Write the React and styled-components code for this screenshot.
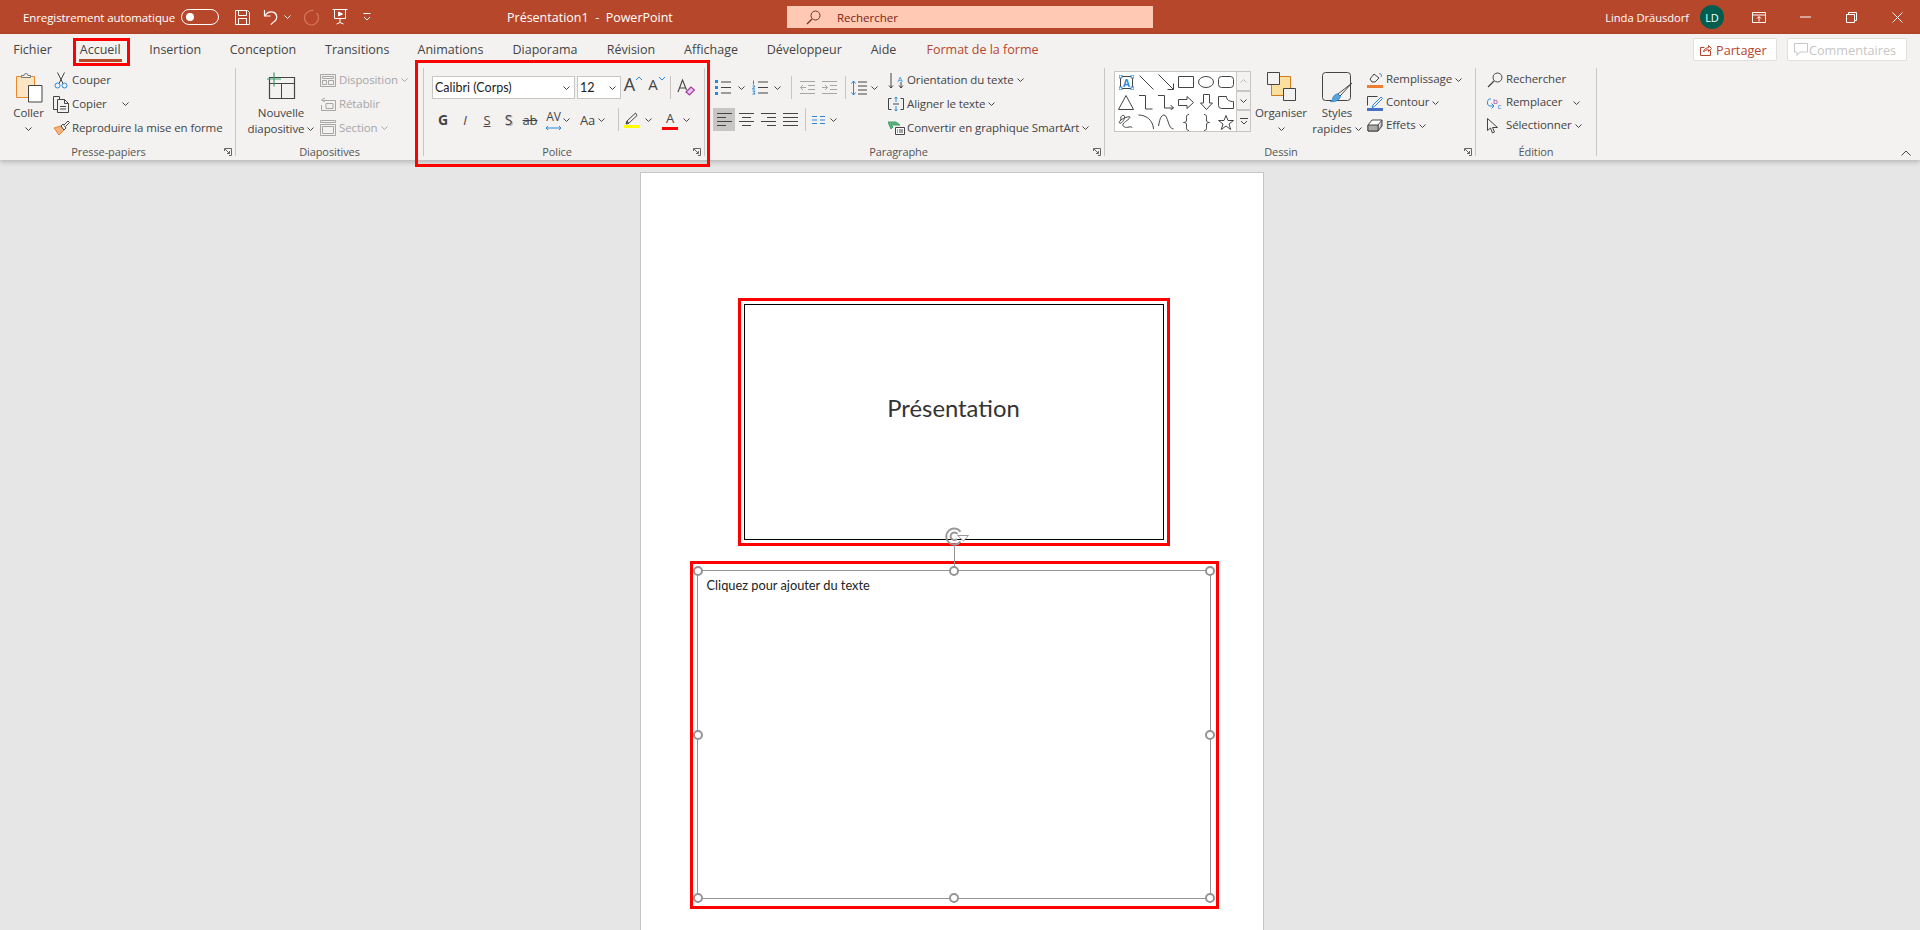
import React from 'react';
import styled, { createGlobalStyle } from 'styled-components';

const GlobalStyle = createGlobalStyle`
  html, body, #root { margin: 0; height: 100%; }
  body {
    overflow: hidden;
    background: #e6e6e6;
    font-family: "Open Sans", "Noto Sans", sans-serif;
    color: #444;
  }
  * { box-sizing: border-box; }
`;

const BRAND = '#b7472a';

const Svg = ({ w, h = w, stroke = '#444', children }) => (
  <svg width={w} height={h} viewBox={`0 0 ${w} ${h}`} fill="none" stroke={stroke} strokeWidth="1" style={{ display: 'block', flex: 'none' }}>
    {children}
  </svg>
);

const Chevron = ({ color = '#444' }) => (
  <Svg w={7} h={4} stroke={color}><path d="M.5.5l3 3 3-3" /></Svg>
);

/* title bar icons */
const SaveIcon = () => (
  <Svg w={17} stroke="#fff"><path d="M1.5 1.5h12l2 2v12h-14zM4.5 1.5v5h8v-5M4.5 15.5v-6h8v6" /></Svg>
);
const UndoIcon = () => (
  <Svg w={16} stroke="#fff" ><path d="M1.5 1v6h6" strokeWidth="1.2" /><path d="M2 7C4 3.5 7 2.5 10 3.2c4.2 1 5 6.5 1.5 9.2-1 .8-2.5 2-3.7 3.2" strokeWidth="1.2" /></Svg>
);
const RedoIcon = () => (
  <Svg w={17} stroke="#d9775c"><path d="M10.5 1.5C6 .8 1.5 4 1.5 9a7 7 0 1 0 14 0c0-2-.8-3.800-2-5" strokeWidth="1.2" /></Svg>
);
const PresentIcon = () => (
  <Svg w={16} stroke="#fff"><path d="M.5.500h15M2.500.5v9h11v-9M8 9.500v4M4.500 15l3.500-1.500 3.500 1.500" /><path d="M6.500 3l4 2-4 2z" fill="#fff" /></Svg>
);
const CustomizeIcon = () => (
  <Svg w={8} h={8} stroke="#fff"><path d="M.5.500h7M1 4l3 3 3-3" /></Svg>
);
const SearchGlass = ({ c = '#7a2f1c', w = 15 }) => (
  <Svg w={w} stroke={c}><circle cx={w - 5.5} cy="5.500" r="4.500" /><path d={`M${w - 9} 9L1 ${w - 1}`} strokeWidth="1.300" /></Svg>
);
const RibbonModeIcon = () => (
  <Svg w={14} h={11} stroke="#fff"><path d="M.5 3h13M.5.500h13v10H.5z" /><path d="M7 9.500v-5M5 6.500l2-2 2 2" /></Svg>
);
const MinIcon = () => <Svg w={11} h={2} stroke="#fff"><path d="M0 1h11" /></Svg>;
const RestoreIcon = () => (
  <Svg w={11} stroke="#fff"><path d="M.5 2.500h8v8h-8zM2.500 2.500v-2h8v8h-2" /></Svg>
);
const CloseIcon = () => (
  <Svg w={11} stroke="#fff"><path d="M.5.500l10 10M10.500.500l-10 10" /></Svg>
);
const ShareIcon = () => (
  <Svg w={12} stroke={BRAND}><path d="M10.500 6.500v5h-10v-8h4M3.500 8c.4-2.800 2.500-4.200 5-4.200V1.500l3 3-3 3V5.800C6.500 5.800 4.700 6.300 3.500 8z" /></Svg>
);
const CommentIcon = () => (
  <Svg w={14} h={14} stroke="#c8c6c4"><path d="M.5.500h13v8.500H6l-3 3.500V9H.5z" /></Svg>
);

/* clipboard */
const PasteIcon = () => (
  <Svg w={28} h={31}>
    <path d="M1.500 4.500h18v21h-18z" fill="#fbe5c5" stroke="#e8892c" />
    <path d="M4 7h13v16H4z" fill="#fbe5c5" stroke="none" />
    <path d="M6.500 5.500V3.500h2.500a2 2 0 0 1 4 0h2.500v2z" fill="#f3f2f1" stroke="#777" />
    <path d="M13.500 13.500h13.500v16.500H13.500z" fill="#fff" stroke="#444" />
  </Svg>
);
const CutIcon = () => (
  <Svg w={16} h={17}>
    <path d="M4.500 .5l5.500 11M11.500 .5L6 11.500" />
    <circle cx="4.500" cy="13.500" r="2.500" stroke="#2b88d8" />
    <circle cx="11.500" cy="13.500" r="2.500" stroke="#2b88d8" />
  </Svg>
);
const CopyIcon = () => (
  <Svg w={16} h={17}>
    <path d="M4.500 13.500H.5V.5h6v3" />
    <path d="M4.500 3.500h7l4 4v9h-11zM11.500 3.500v4h4M7 10.500h6M7 13h6" />
  </Svg>
);
const PainterIcon = () => (
  <Svg w={17} h={16}>
    <path d="M1 8l5 7 5-5-3-4z" fill="#f4b183" stroke="#e8892c" />
    <path d="M8 6l3 4 2-2-3-4z" fill="#fff" />
    <path d="M11 5l4-4 1.500 1.500-4 4" fill="#fff" />
  </Svg>
);

/* slides */
const NewSlideIcon = () => (
  <Svg w={31} h={27}>
    <path d="M3.500 5.500h25v21h-25z" strokeWidth="1.200" fill="#f3f2f1" />
    <path d="M3.500 11.500h25M15.500 11.500v15" />
    <path d="M8 .5v14M1 7h14" stroke="#3ca06a" strokeWidth="1.200" />
  </Svg>
);
const LayoutIcon = () => (
  <Svg w={16} h={15} stroke="#a6a6a6"><path d="M.5 1.500h15v12H.5zM2.500 3.500h11v2h-11zM2.500 7.500h4v4h-4zM8.500 7.500h5v4h-5z" /></Svg>
);
const ResetIcon = () => (
  <Svg w={16} h={15} stroke="#a6a6a6"><path d="M3.500 3.500h12v10H1.500V8M6 6.500h7v5H6zM5 1L1.500 3 5 5" /></Svg>
);
const SectionIcon = () => (
  <Svg w={16} h={16} stroke="#a6a6a6"><path d="M.5.500h15v2H.5zM.5 4.500h15v11H.5zM2.500 6.500h11v7h-11z" /></Svg>
);

/* font */
const Letter = styled.span`
  font-size: ${p => p.$s || 13}px;
  font-weight: ${p => (p.$bold ? 700 : 400)};
  font-style: ${p => (p.$italic ? 'italic' : 'normal')};
  text-decoration: ${p => p.$deco || 'none'};
  text-shadow: ${p => (p.$shadow ? '1px 1px 1px #aaa' : 'none')};
  line-height: 16px;
  color: #444;
`;
const CaseUp = () => (
  <Svg w={8} h={5} stroke="#2b88d8"><path d="M1 4l3-3 3 3" /></Svg>
);
const CaseDown = () => (
  <Svg w={8} h={5} stroke="#2b88d8"><path d="M1 1l3 3 3-3" /></Svg>
);
const ClearIcon = () => (
  <Svg w={18} h={17}>
    <path d="M1 13L5.500 1 9.500 11M2.500 9h6" strokeWidth="1.100" />
    <path d="M9 13l5-5 3.500 3-5 5z" fill="#e8c6ef" stroke="#a4379c" strokeWidth="1.200" />
  </Svg>
);
const SpacingIcon = () => (
  <Svg w={17} h={6} stroke="#2b88d8"><path d="M1 3h15M3 1L1 3l2 2M14 1l2 2-2 2" /></Svg>
);
const HighlightIcon = () => (
  <Svg w={16} h={16}>
    <path d="M3 9l1.500 2.500L13 3.500 11.500 1z" />
    <path d="M2 12l1-3 1.500 2.500z" fill="#777" />
    <path d="M0 13h16v3H0z" fill="#ffff00" stroke="none" />
  </Svg>
);

/* paragraph */
const ListLines = ({ kind }) => (
  <Svg w={kind === 'num' ? 17 : 16} h={15}>
    <path d={kind === 'num' ? 'M7 2h10M7 7.500h10M7 13h10' : 'M6 2h10M6 7.500h10M6 13h10'} />
    {kind === 'num' ? (
      <path d="M2.500 .5v4M1.500 6h2.500l-2.500 3h2.500M1.500 11h2.500l-1 1.500 1 1.500h-2.500" stroke="#2b88d8" />
    ) : (
      <path d="M0 0h3v3H0zM0 6h3v3H0zM0 12h3v3H0z" fill="#2b88d8" stroke="none" />
    )}
  </Svg>
);
const IndentIcon = ({ dir }) => (
  <Svg w={15} h={13} stroke="#a6a6a6">
    <path d="M0 .5h15M8 4.500h7M8 8.500h7M0 12.500h15" />
    <path d={dir === 'out' ? 'M6 6.500H.5M3 4L.5 6.500 3 9' : 'M0 6.500h5.500M3 4l2.500 2.500L3 9'} />
  </Svg>
);
const LineSpacing = () => (
  <Svg w={16} h={16}>
    <path d="M2.500 1v14" stroke="#2b88d8" />
    <path d="M.5 3.500l2-2.500 2 2.500M.5 12.500l2 2.500 2-2.500" stroke="#2b88d8" />
    <path d="M7 2h9M7 6h9M7 10h9M7 14h9" />
  </Svg>
);
const alignPaths = {
  left: 'M0 .5h15M0 4.500h9M0 8.500h15M0 12.500h9',
  center: 'M0 .5h15M3 4.500h9M0 8.500h15M3 12.500h9',
  right: 'M0 .5h15M6 4.500h9M0 8.500h15M6 12.500h9',
  justify: 'M0 .5h15M0 4.500h15M0 8.500h15M0 12.500h15',
};
const AlignIcon = ({ kind }) => <Svg w={15} h={13}><path d={alignPaths[kind]} /></Svg>;
const ColumnsIcon = () => (
  <Svg w={13} h={8} stroke="#2b88d8"><path d="M0 .5h5M8 .5h5M0 4h5M8 4h5M0 7.500h5M8 7.500h5" /></Svg>
);
const OrientIcon = () => (
  <Svg w={17} h={17}>
    <path d="M3 1v15M1 13.500L3 16l2-2.500M13 10v6M11 13.500l2 2.500 2-2.500" />
    <text x="9.500" y="9.500" fontFamily="Open Sans" fontSize="8" stroke="none" fill="#2b88d8">A</text>
  </Svg>
);
const AlignTextIcon = () => (
  <Svg w={16} h={16}>
    <path d="M3.500 2.500h-3v11h3M12.500 2.500h3v11h-3" />
    <path d="M5 8h6" />
    <path d="M8 1v5M6.500 2.500L8 1l1.500 1.500M8 10v5M6.500 13.500L8 15l1.500-1.500" stroke="#2b88d8" />
  </Svg>
);
const SmartArtIcon = () => (
  <Svg w={17} h={14}>
    <path d="M0 1h8l4 3H3l2 2-2 2z" fill="#5fb37d" stroke="#3ca06a" />
    <path d="M7.500 6.500h9v7h-9z" fill="#fff" />
    <path d="M9 9h1M11 9h4M9 11h1M11 11h4" />
  </Svg>
);

/* drawing gallery */
const Shapes = [
  <Svg w={15} key="box"><path d="M1.500 1.500h12v12h-12z" /><path d="M0 0h3v3H0zM12 0h3v3h-3zM0 12h3v3H0zM12 12h3v3h-3z" fill="#fff" stroke="#2b88d8" /><text x="4" y="12" fontFamily="Open Sans" fontWeight="700" fontSize="10" stroke="none" fill="#2b88d8">A</text></Svg>,
  <Svg w={15} key="line"><path d="M.5.500l14 14" /></Svg>,
  <Svg w={16} key="arrow"><path d="M.5.500l15 15M15.500 9.500v6h-6" /></Svg>,
  <Svg w={16} h={12} key="rect"><path d="M.5.500h15v11H.5z" /></Svg>,
  <Svg w={16} h={12} key="ell"><ellipse cx="8" cy="6" rx="7.500" ry="5.500" /></Svg>,
  <Svg w={16} h={12} key="rr"><rect x=".5" y=".5" width="15" height="11" rx="3" /></Svg>,
  <Svg w={16} h={15} key="tri"><path d="M8 .5l7.500 14H.5z" /></Svg>,
  <Svg w={14} h={15} key="elb"><path d="M0 .5h6.500v13.500h7" /></Svg>,
  <Svg w={16} h={15} key="elba"><path d="M0 .5h6.500v12.500h9M12.500 10l3 3-3 2" /></Svg>,
  <Svg w={16} h={13} key="ra"><path d="M.5 3.500h8.500v-3l6.500 6-6.500 6v-3H.5z" /></Svg>,
  <Svg w={13} h={16} key="da"><path d="M3.500.5h6v8.500h3l-6 6.500-6-6.500h3z" /></Svg>,
  <Svg w={16} h={13} key="fc"><path d="M.5.500h8c0 4 3.500 5 7 5v7h-12a3 3 0 0 1-3-3z" /></Svg>,
  <Svg w={16} key="scr"><path d="M3 6C2 3 4 .5 6 1.500 8 3 5 8 3 9c-2 1-2.500-1 0-3 3-2.500 9-4 9-3 0 2-6 5-7 7-1 3 3 4 6 3 2-.5 3 0 3 1" /></Svg>,
  <Svg w={16} key="arc"><path d="M.5 1C8 1 15 6 15.500 15" /></Svg>,
  <Svg w={16} key="sc"><path d="M.5 12C2 3 4 1 6 1c4 0 4 14 9.500 14" /></Svg>,
  <Svg w={7} h={17} key="lb"><path d="M6 .5C3 .5 3.500 3 3.500 6c0 2-1 2.500-3 2.500 2 0 3 .5 3 2.500 0 3-.5 5.500 2.500 5.500" /></Svg>,
  <Svg w={7} h={17} key="rb"><path d="M1 .5C4 .5 3.500 3 3.500 6c0 2 1 2.500 3 2.500-2 0-3 .5-3 2.500 0 3 .5 5.500-2.500 5.500" /></Svg>,
  <Svg w={16} h={15} key="star"><path d="M8 .5l2 5h5.500l-4.500 3.500 1.700 5.500L8 11l-4.700 3.500L5 9 .5 5.500H6z" /></Svg>,
];
const ArrangeIcon = () => (
  <Svg w={29} h={29}>
    <path d="M4.500 4.500h19v19h-19z" fill="#fbdf9e" stroke="#d97a1a" />
    <path d="M.5.500h12v12H.5zM16.500 16.500h12v12h-12z" fill="#f3f2f1" />
  </Svg>
);
const QuickStyleIcon = () => (
  <Svg w={31} h={31}>
    <rect x=".5" y=".5" width="28" height="28" rx="3" />
    <path d="M30 11L18 24l-2-2z" fill="#fff" />
    <path d="M16 22l2.500 2.500C17 29 12 30 8.500 29.500c2-1 2-3 3-5 1-1.500 3-3 4.500-2.500z" fill="#5ba3d9" stroke="#2b88d8" />
  </Svg>
);
const FillIcon = () => (
  <Svg w={16} h={16}>
    <path d="M3 7l4-5 5 4-4 4-3 0z" />
    <path d="M12 2c2-1 3 1 2 3" stroke="#2b88d8" />
    <path d="M0 13h16v3H0z" fill="#ed7d31" stroke="none" />
  </Svg>
);
const OutlineIcon = () => (
  <Svg w={16} h={16}>
    <path d="M.5 10.500v-9h10" />
    <path d="M6 10l8-8 1.500 1.500-8 8-2.500 1z" stroke="#2b88d8" />
    <path d="M0 13h16v3H0z" fill="#4472c4" stroke="none" />
  </Svg>
);
const EffectsIcon = () => (
  <Svg w={16} h={13}>
    <path d="M1 6l4-5h10l-4 5v6H1z" fill="#fff" />
    <path d="M1 6h10v6H1zM11 12l4-5V1" fill="#aaa" />
  </Svg>
);

/* editing */
const ReplaceIcon = () => (
  <Svg w={16} h={16}>
    <path d="M4 4H2.500C1 4 .5 6 .5 8s1 3 3 3h3M4.500 8.500L7 11l-2.500 2.500" stroke="#2b88d8" />
    <text x="6" y="9" fontFamily="Open Sans" fontSize="8" stroke="none" fill="#a4379c">b</text>
    <text x="10.500" y="13.500" fontFamily="Open Sans" fontSize="8" stroke="none" fill="#2b88d8">c</text>
  </Svg>
);
const CursorIcon = () => (
  <Svg w={12} h={16}><path d="M.5.500v12l3-2.500 2 5 2-1-2-4.500h5z" /></Svg>
);
const Launcher = () => (
  <LauncherBox>
    <Svg w={8} h={8} stroke="#666"><path d="M.5 3V.5h7V7.500H5M1 1l4.500 4.500M5.500 3v2.500H3" /></Svg>
  </LauncherBox>
);
const RotateIcon = () => (
  <Svg w={25} h={19} stroke="#999">
    <path d="M15.500 14.500A8 8 0 1 1 15.500 4.500" strokeWidth="2" />
    <path d="M12 12A3.800 3.800 0 1 1 12.500 7" strokeWidth="2" />
    <path d="M12.500 8.500h11l-5 5.500z" fill="#fff" />
  </Svg>
);

const tabs = [
  ['Fichier', 65], ['Accueil', 70.5], ['Insertion', 79.5], ['Conception', 96], ['Transitions', 92.5],
  ['Animations', 94], ['Diaporama', 95], ['Révision', 77], ['Affichage', 83], ['Développeur', 103.5],
  ['Aide', 55], ['Format de la forme', 143],
];

const handles = [
  [0, 0], [50, 0], [100, 0], [0, 50], [100, 50], [0, 100], [50, 100], [100, 100],
];

export default function App() {
  return (
    <Window>
      <GlobalStyle />
      <TitleBar>
        <QuickAccess>
          <AutoSave>Enregistrement automatique</AutoSave>
          <Toggle />
          <QuickIcons>
            <SaveIcon />
            <QuickGroup><UndoIcon /><Chevron color="#fff" /></QuickGroup>
            <RedoIcon />
            <PresentIcon />
            <CustomizeWrap><CustomizeIcon /></CustomizeWrap>
          </QuickIcons>
        </QuickAccess>
        <DocTitle>Présentation1  -  PowerPoint</DocTitle>
        <SearchBox><SearchGlass /><SearchText>Rechercher</SearchText></SearchBox>
        <UserArea>
          <UserName>Linda Dräusdorf</UserName>
          <Avatar>LD</Avatar>
          <RibbonModeBtn $w={58}><RibbonModeIcon /></RibbonModeBtn>
          <WindowBtn $w={46}><MinIcon /></WindowBtn>
          <WindowBtn $w={46}><RestoreIcon /></WindowBtn>
          <WindowBtn $w={46}><CloseIcon /></WindowBtn>
        </UserArea>
      </TitleBar>

      <Ribbon>
        <TabRow>
          <Tabs>
            {tabs.map(([name, w]) => (
              <Tab key={name} $w={w} $context={name === 'Format de la forme'}>
                {name === 'Accueil' ? <ActiveTab>{name}</ActiveTab> : name}
              </Tab>
            ))}
          </Tabs>
          <ShareArea>
            <ShareBtn $w={84} $g={4}><ShareIcon />Partager</ShareBtn>
            <ShareBtn $w={120} $g={1} $disabled><CommentIcon />Commentaires</ShareBtn>
          </ShareArea>
        </TabRow>

        <Groups>
          <Group $w={236}>
            <Content>
              <BigBtn $w={49} $ml={4}>
                <BigIcon><PasteIcon /></BigIcon>
                <BigLabel>Coller</BigLabel>
                <BigChevron><Chevron /></BigChevron>
              </BigBtn>
              <SmallCol>
                <SmallRow><RowIcon><CutIcon /></RowIcon><RowText>Couper</RowText></SmallRow>
                <SmallRow><RowIcon><CopyIcon /></RowIcon><RowText>Copier</RowText><RowChevron $ml={15}><Chevron /></RowChevron></SmallRow>
                <SmallRow><RowIcon><PainterIcon /></RowIcon><RowText>Reproduire la mise en forme</RowText></SmallRow>
              </SmallCol>
            </Content>
            <GroupLabel $shift={-9}>Presse-papiers</GroupLabel>
            <Launcher />
          </Group>

          <Group $w={188}>
            <Content>
              <BigBtn $w={72} $ml={9}>
                <BigIcon><NewSlideIcon /></BigIcon>
                <BigLabel>Nouvelle</BigLabel>
                <BigLabel>diapositive <Chevron /></BigLabel>
              </BigBtn>
              <SmallCol $ml={3} $muted>
                <SmallRow><RowIcon><LayoutIcon /></RowIcon><RowText>Disposition</RowText><RowChevron><Chevron color="#a6a6a6" /></RowChevron></SmallRow>
                <SmallRow><RowIcon><ResetIcon /></RowIcon><RowText>Rétablir</RowText></SmallRow>
                <SmallRow><RowIcon><SectionIcon /></RowIcon><RowText>Section</RowText><RowChevron><Chevron color="#a6a6a6" /></RowChevron></SmallRow>
              </SmallCol>
            </Content>
            <GroupLabel>Diapositives</GroupLabel>
          </Group>

          <Group $w={281} $framed>
            <Content>
              <ToolRows>
                <ToolRow>
                  <SelectBox $w={143}><SelectText>Calibri (Corps)</SelectText><Chevron /></SelectBox>
                  <SelectBox $w={44} $ml={2}><SelectText>12</SelectText><Chevron /></SelectBox>
                  <Tool $w={25} $g={0} $top><Letter $s={18}>A</Letter><CaseUp /></Tool>
                  <Tool $w={22} $g={0} $top><Letter $s={15}>A</Letter><CaseDown /></Tool>
                  <Sep $ml={2} />
                  <Tool $w={30}><ClearIcon /></Tool>
                </ToolRow>
                <ToolRow>
                  <Tool $w={22}><Letter $s={14} $bold>G</Letter></Tool>
                  <Tool $w={22}><Letter $s={13} $italic>I</Letter></Tool>
                  <Tool $w={22}><Letter $s={13} $deco="underline">S</Letter></Tool>
                  <Tool $w={21}><Letter $s={14} $shadow>S</Letter></Tool>
                  <Tool $w={22}><Letter $s={13} $deco="line-through">ab</Letter></Tool>
                  <Tool $w={33} $g={1}>
                    <AVStack><Letter $s={12}>AV</Letter><SpacingIcon /></AVStack>
                    <Chevron />
                  </Tool>
                  <Tool $w={37}><Letter $s={13}>Aa</Letter><Chevron /></Tool>
                  <Sep $ml={7} />
                  <Tool $w={38} $g={5}><HighlightIcon /><Chevron /></Tool>
                  <Tool $w={38} $g={5}>
                    <AVStack><Letter $s={13}>A</Letter><ColorBar /></AVStack>
                    <Chevron />
                  </Tool>
                </ToolRow>
              </ToolRows>
            </Content>
            <GroupLabel $shift={-7}>Police</GroupLabel>
            <Launcher />
          </Group>

          <Group $w={400}>
            <Content>
              <ToolRows $w={183}>
                <ToolRow>
                  <Tool $w={34} $g={7}><ListLines kind="bullet" /><Chevron /></Tool>
                  <Tool $w={38} $g={6}><ListLines kind="num" /><Chevron /></Tool>
                  <Sep $ml={6} />
                  <Tool $w={26} $ml={2}><IndentIcon dir="out" /></Tool>
                  <Tool $w={18}><IndentIcon dir="in" /></Tool>
                  <Sep $ml={7} />
                  <Tool $w={36} $g={4}><LineSpacing /><Chevron /></Tool>
                </ToolRow>
                <ToolRow>
                  <Tool $w={22} $on><AlignIcon kind="left" /></Tool>
                  <Tool $w={22}><AlignIcon kind="center" /></Tool>
                  <Tool $w={22}><AlignIcon kind="right" /></Tool>
                  <Tool $w={22}><AlignIcon kind="justify" /></Tool>
                  <Sep $ml={4} />
                  <Tool $w={36} $g={5}><ColumnsIcon /><Chevron /></Tool>
                </ToolRow>
              </ToolRows>
              <SmallCol>
                <SmallRow><RowIcon><OrientIcon /></RowIcon><RowText>Orientation du texte</RowText><RowChevron><Chevron /></RowChevron></SmallRow>
                <SmallRow><RowIcon><AlignTextIcon /></RowIcon><RowText>Aligner le texte</RowText><RowChevron><Chevron /></RowChevron></SmallRow>
                <SmallRow><RowIcon><SmartArtIcon /></RowIcon><RowText>Convertir en graphique SmartArt</RowText><RowChevron><Chevron /></RowChevron></SmallRow>
              </SmallCol>
            </Content>
            <GroupLabel $shift={-6}>Paragraphe</GroupLabel>
            <Launcher />
          </Group>

          <Group $w={371}>
            <Content>
              <Gallery>
                <ShapeGrid>
                  {Shapes.map(s => <ShapeCell key={s.key}>{s}</ShapeCell>)}
                </ShapeGrid>
                <ScrollCol>
                  <ScrollBtn $h={20}><Svg w={7} h={4} stroke="#bbb"><path d="M.5 3.500l3-3 3 3" /></Svg></ScrollBtn>
                  <ScrollBtn $h={19}><Chevron /></ScrollBtn>
                  <ScrollBtn $h={22}><Svg w={8} h={7}><path d="M0 .5h8M1 3l3 3 3-3" /></Svg></ScrollBtn>
                </ScrollCol>
              </Gallery>
              <BigBtn $w={60}>
                <BigIcon><ArrangeIcon /></BigIcon>
                <BigLabel>Organiser</BigLabel>
                <BigChevron><Chevron /></BigChevron>
              </BigBtn>
              <BigBtn $w={52}>
                <BigIcon><QuickStyleIcon /></BigIcon>
                <BigLabel>Styles</BigLabel>
                <BigLabel>rapides <Chevron /></BigLabel>
              </BigBtn>
              <SmallCol $ml={4}>
                <SmallRow $h={23}><RowIcon><FillIcon /></RowIcon><RowText>Remplissage</RowText><RowChevron><Chevron /></RowChevron></SmallRow>
                <SmallRow $h={23}><RowIcon><OutlineIcon /></RowIcon><RowText>Contour</RowText><RowChevron><Chevron /></RowChevron></SmallRow>
                <SmallRow $h={23}><RowIcon><EffectsIcon /></RowIcon><RowText>Effets</RowText><RowChevron><Chevron /></RowChevron></SmallRow>
              </SmallCol>
            </Content>
            <GroupLabel $shift={-9}>Dessin</GroupLabel>
            <Launcher />
          </Group>

          <Group $w={121}>
            <Content>
              <SmallCol $ml={11}>
                <SmallRow $h={23}><RowIcon><SearchGlass c="#444" w={16} /></RowIcon><RowText>Rechercher</RowText></SmallRow>
                <SmallRow $h={23}><RowIcon><ReplaceIcon /></RowIcon><RowText>Remplacer</RowText><RowChevron $ml={11}><Chevron /></RowChevron></SmallRow>
                <SmallRow $h={23}><RowIcon><CursorIcon /></RowIcon><RowText>Sélectionner</RowText><RowChevron><Chevron /></RowChevron></SmallRow>
              </SmallCol>
            </Content>
            <GroupLabel>Édition</GroupLabel>
          </Group>
        </Groups>
        <Collapse><Svg w={10} h={6}><path d="M.5 5.500l4.500-4.500 4.500 4.500" /></Svg></Collapse>
      </Ribbon>

      <Canvas>
        <Slide>
          <TitleHolder>Présentation</TitleHolder>
          <TextHolder>
            <RotateGrip><RotateIcon /></RotateGrip>
            <RotateStem />
            {handles.map(([x, y]) => <Handle key={`${x}-${y}`} $x={x} $y={y} />)}
            Cliquez pour ajouter du texte
          </TextHolder>
        </Slide>
      </Canvas>
    </Window>
  );
}

const Window = styled.div`
  height: 100vh;
  display: flex;
  flex-direction: column;
  overflow: hidden;
`;

const TitleBar = styled.header`
  height: 34px;
  flex: none;
  display: flex;
  align-items: center;
  background: ${BRAND};
  color: #fff;
  font-size: 11.5px;
`;

const QuickAccess = styled.div`
  width: 507px;
  padding-left: 23px;
  display: flex;
  align-items: center;
`;

const AutoSave = styled.span`
  width: 158px;
  white-space: nowrap;
  letter-spacing: -0.1px;
`;

const Toggle = styled.span`
  position: relative;
  width: 38px;
  height: 16px;
  border: 1px solid #fff;
  border-radius: 8px;

  &::after {
    content: '';
    position: absolute;
    left: 4px;
    top: 3px;
    width: 8px;
    height: 8px;
    border-radius: 50%;
    background: #fff;
  }
`;

const QuickIcons = styled.div`
  margin-left: 15px;
  display: flex;
  align-items: center;
  gap: 12px;
`;

const QuickGroup = styled.div`
  display: flex;
  align-items: center;
  gap: 5px;
`;

const CustomizeWrap = styled.span`
  margin-left: 3px;
`;

const DocTitle = styled.span`
  width: 280px;
  font-size: 12.5px;
  white-space: pre;
`;

const SearchBox = styled.div`
  width: 366px;
  height: 22px;
  background: #ffc9b3;
  display: flex;
  align-items: center;
  padding-left: 19px;
  gap: 16px;
`;

const SearchText = styled.span`
  color: #7a2315;
`;

const UserArea = styled.div`
  flex: 1;
  display: flex;
  align-items: center;
  justify-content: flex-end;
`;

const UserName = styled.span`
  white-space: nowrap;
  font-size: 11.2px;
  letter-spacing: -0.05px;
`;

const Avatar = styled.span`
  width: 24px;
  height: 24px;
  margin-left: 11px;
  border-radius: 50%;
  background: #005e50;
  display: flex;
  align-items: center;
  justify-content: center;
  font-size: 11px;
`;

const WindowBtn = styled.span`
  width: ${p => p.$w}px;
  display: flex;
  justify-content: center;
`;

const RibbonModeBtn = styled(WindowBtn)`
  padding-left: 11px;
`;

const Ribbon = styled.section`
  position: relative;
  height: 126px;
  flex: none;
  background: #f3f2f1;
  box-shadow: 0 2px 5px rgba(0, 0, 0, 0.22);
  font-size: 11.5px;
  letter-spacing: -0.1px;
`;

const TabRow = styled.nav`
  height: 34px;
  display: flex;
  justify-content: space-between;
  align-items: center;
  padding: 0 13px 3px 0;
`;

const Tabs = styled.div`
  display: flex;
`;

const Tab = styled.div`
  width: ${p => p.$w}px;
  display: flex;
  justify-content: center;
  font-size: 12.5px;
  letter-spacing: 0;
  line-height: 18px;
  white-space: nowrap;
  color: ${p => (p.$context ? BRAND : '#444')};
`;

const ActiveTab = styled.span`
  position: relative;
  padding: 0 1px;

  &::before {
    content: '';
    position: absolute;
    left: -6px;
    right: -8px;
    top: -3px;
    bottom: -7px;
    border: 3px solid #ff0000;
  }

  &::after {
    content: '';
    position: absolute;
    left: 0;
    right: 0;
    bottom: -3px;
    height: 3px;
    background: ${BRAND};
  }
`;

const ShareArea = styled.div`
  display: flex;
  gap: 10px;
`;

const ShareBtn = styled.div`
  width: ${p => p.$w}px;
  height: 23px;
  padding-left: 6px;
  background: #fff;
  border: 1px solid #e1dfdd;
  border-radius: 2px;
  display: flex;
  align-items: center;
  gap: ${p => p.$g}px;
  font-size: 12.7px;
  letter-spacing: 0;
  white-space: nowrap;
  color: ${p => (p.$disabled ? '#c8c6c4' : BRAND)};
`;

const Groups = styled.div`
  display: flex;
`;

const Group = styled.div`
  position: relative;
  width: ${p => p.$w}px;
  height: 88px;
  border-right: 1px solid #c8c6c4;
  display: flex;
  flex-direction: column;

  ${p => p.$framed && `
    &::after {
      content: '';
      position: absolute;
      left: -9px;
      right: -6px;
      top: -8px;
      bottom: -11px;
      border: 3px solid #ff0000;
      pointer-events: none;
    }
  `}
`;

const Content = styled.div`
  flex: 1;
  display: flex;
  align-items: flex-start;
`;

const GroupLabel = styled.div`
  height: 16px;
  margin-bottom: -4px;
  line-height: 16px;
  text-align: center;
  transform: translateX(${p => p.$shift || 0}px);
  font-size: 11px;
  color: #555;
`;

const LauncherBox = styled.span`
  position: absolute;
  right: 3px;
  bottom: 0;
`;

const BigBtn = styled.div`
  width: ${p => p.$w}px;
  margin-left: ${p => p.$ml || 0}px;
  padding-top: 4px;
  display: flex;
  flex-direction: column;
  align-items: center;
  flex: none;
`;

const BigIcon = styled.div`
  height: 33px;
`;

const BigLabel = styled.div`
  height: 16px;
  line-height: 16px;
  display: flex;
  align-items: center;
  gap: 3px;
  white-space: nowrap;
`;

const BigChevron = styled.div`
  height: 16px;
  display: flex;
  align-items: center;
`;

const SmallCol = styled.div`
  margin-left: ${p => p.$ml || 0}px;
  flex: none;
  color: ${p => (p.$muted ? '#a6a6a6' : '#444')};
`;

const SmallRow = styled.div`
  height: ${p => p.$h || 24}px;
  display: flex;
  align-items: center;
  white-space: nowrap;
`;

const RowText = styled.span`
  margin-top: -2px;
`;

const RowIcon = styled.span`
  width: 19px;
  flex: none;
`;

const RowChevron = styled.span`
  margin-left: ${p => p.$ml || 3}px;
`;

const ToolRows = styled.div`
  ${p => p.$w && `width: ${p.$w}px;`}
  flex: none;
  padding: 8px 0 0 8px;
  display: flex;
  flex-direction: column;
  gap: 9px;
`;

const ToolRow = styled.div`
  height: 23px;
  display: flex;
  align-items: stretch;
`;

const SelectBox = styled.div`
  width: ${p => p.$w}px;
  margin-left: ${p => p.$ml || 0}px;
  flex: none;
  background: #fff;
  border: 1px solid #c8c6c4;
  padding: 0 4px 0 2px;
  display: flex;
  align-items: center;
  justify-content: space-between;
`;

const SelectText = styled.span`
  font-family: "Lato", sans-serif;
  font-size: 12.5px;
  letter-spacing: 0;
  color: #222;
`;

const Tool = styled.div`
  width: ${p => p.$w}px;
  margin-left: ${p => p.$ml || 0}px;
  flex: none;
  display: flex;
  align-items: ${p => (p.$top ? 'flex-start' : 'center')};
  justify-content: center;
  gap: ${p => (p.$g === undefined ? 3 : p.$g)}px;
  background: ${p => (p.$on ? '#c8c6c4' : 'transparent')};
`;

const AVStack = styled.span`
  display: flex;
  flex-direction: column;
  align-items: center;
`;

const ColorBar = styled.span`
  width: 16px;
  height: 3px;
  margin-top: 1px;
  background: #ff0000;
`;

const Sep = styled.span`
  width: 1px;
  margin-left: ${p => p.$ml || 0}px;
  flex: none;
  background: #c8c6c4;
`;

const Gallery = styled.div`
  margin: 3px 0 0 9px;
  display: flex;
  flex: none;
`;

const ShapeGrid = styled.div`
  width: 123px;
  height: 61px;
  padding: 0 1px;
  background: #fff;
  border: 1px solid #c8c6c4;
  display: grid;
  grid-template-columns: repeat(6, 20px);
  grid-auto-rows: 20px;
`;

const ShapeCell = styled.span`
  display: flex;
  align-items: center;
  justify-content: center;
`;

const ScrollCol = styled.div`
  width: 14px;
  display: flex;
  flex-direction: column;
`;

const ScrollBtn = styled.span`
  height: ${p => p.$h}px;
  border: 1px solid #c8c6c4;
  border-left: none;
  display: flex;
  align-items: center;
  justify-content: center;
`;

const Collapse = styled.span`
  position: absolute;
  right: 9px;
  bottom: 4px;
`;

const Canvas = styled.main`
  flex: 1;
  min-height: 0;
  padding: 12px 16px 0 0;
  display: flex;
  justify-content: center;
  overflow: hidden;
`;

const Slide = styled.div`
  width: 624px;
  height: 900px;
  flex: none;
  padding: 131px 0 0 3px;
  background: #fff;
  border: 1px solid #c6c6c6;
  display: flex;
  flex-direction: column;
  align-items: center;
`;

const TitleHolder = styled.div`
  width: 420px;
  height: 236px;
  padding-bottom: 28px;
  border: 1px solid #000;
  outline: 3px solid #ff0000;
  outline-offset: 3px;
  display: flex;
  align-items: center;
  justify-content: center;
  font-family: "Lato", sans-serif;
  font-size: 23.8px;
  color: #333;
`;

const TextHolder = styled.div`
  position: relative;
  width: 514px;
  height: 329px;
  margin-top: 30px;
  padding: 5px 9px;
  border: 1px solid #959595;
  font-family: "Lato", sans-serif;
  font-size: 12.8px;
  line-height: 18px;
  color: #222;

  &::before {
    content: '';
    position: absolute;
    left: -8px;
    right: -9px;
    top: -10px;
    bottom: -11px;
    border: 3px solid #ff0000;
  }
`;

const Handle = styled.span`
  position: absolute;
  left: ${p => p.$x}%;
  top: ${p => p.$y}%;
  width: 10px;
  height: 10px;
  margin: -5px 0 0 -5px;
  background: #fff;
  border: 2px solid #959595;
  border-radius: 50%;
`;

const RotateStem = styled.span`
  position: absolute;
  left: 50%;
  top: -27px;
  width: 1px;
  height: 27px;
  background: #959595;
`;

const RotateGrip = styled.span`
  position: absolute;
  left: 50%;
  top: -44px;
  margin-left: -9px;
  z-index: 1;
`;
